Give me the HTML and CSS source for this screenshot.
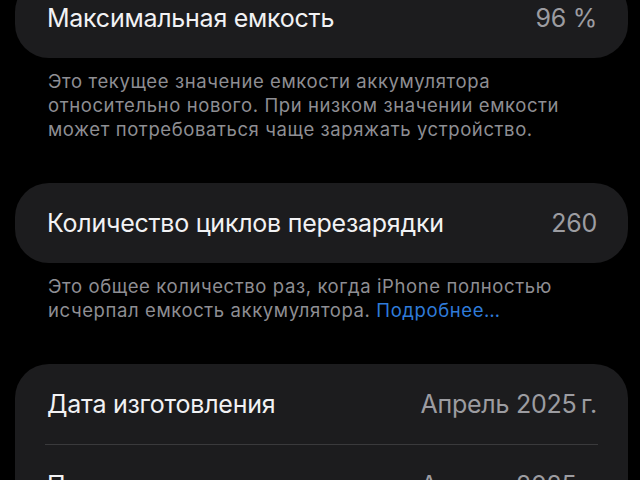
FILE: index.html
```html
<!DOCTYPE html>
<html lang="ru">
<head>
<meta charset="utf-8">
<link rel="stylesheet" href="styles.css">
</head>
<body>
<div class="page">
  <section class="group first">
    <div class="card">
      <div class="row"><span class="label">Максимальная емкость</span><span class="value">96 %</span></div>
    </div>
    <p class="footer">Это текущее значение емкости аккумулятора относительно нового. При низком значении емкости может потребоваться чаще заряжать устройство.</p>
  </section>
  <section class="group">
    <div class="card">
      <div class="row"><span class="label">Количество циклов перезарядки</span><span class="value">260</span></div>
    </div>
    <p class="footer">Это общее количество раз, когда iPhone полностью исчерпал емкость аккумулятора. <span class="link">Подробнее…</span></p>
  </section>
  <section class="group">
    <div class="card">
      <div class="row"><span class="label">Дата изготовления</span><span class="value">Апрель 2025&#8239;г.</span></div>
      <div class="sep"></div>
      <div class="row"><span class="label">Первое использование</span><span class="value">Апрель 2025&#8239;г.</span></div>
    </div>
  </section>
</div>
</body>
</html>
```
FILE: styles.css
```css
html, body {
  margin: 0;
  padding: 0;
  background: #000;
  width: 640px;
  height: 480px;
  overflow: hidden;
}
.page {
  padding: 0 12px 0 15px;
  font-family: "Inter", "Noto Sans", sans-serif;
  -webkit-font-smoothing: antialiased;
}
.group.first {
  margin-top: -22px;
}
.card {
  background: #1c1c1e;
  border-radius: 34px;
}
.row {
  height: 80px;
  display: flex;
  align-items: center;
  justify-content: space-between;
  padding: 0 31px 0 32px;
  font-size: 25px;
  letter-spacing: -0.25px;
}
.label {
  color: #f2f2f4;
}
.value {
  color: #9c9ca1;
}
.sep {
  height: 1px;
  background: #3a3a3c;
  margin: 0 30px;
}
.footer {
  margin: 0;
  padding: 11px 40px 42px 33px;
  font-size: 18.5px;
  line-height: 24px;
  letter-spacing: 0.6px;
  color: #8e8e93;
}
.link {
  color: #2f7bd9;
}
```
